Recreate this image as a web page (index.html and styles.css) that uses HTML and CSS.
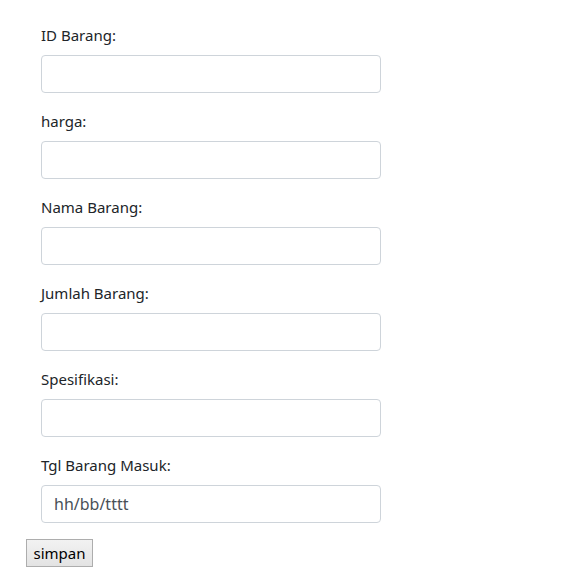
FILE: index.html
```html
<!DOCTYPE html>
<html lang="id">
<head>
<meta charset="utf-8">
<title>Form Barang</title>
<link rel="stylesheet" href="styles.css">
</head>
<body>
<form class="form">
  <div class="fields">
    <div class="group">
      <label class="label" for="id">ID Barang:</label>
      <input class="control" type="text" id="id">
    </div>
    <div class="group">
      <label class="label" for="harga">harga:</label>
      <input class="control" type="text" id="harga">
    </div>
    <div class="group">
      <label class="label" for="nama">Nama Barang:</label>
      <input class="control" type="text" id="nama">
    </div>
    <div class="group">
      <label class="label" for="jumlah">Jumlah Barang:</label>
      <input class="control" type="text" id="jumlah">
    </div>
    <div class="group">
      <label class="label" for="spek">Spesifikasi:</label>
      <input class="control" type="text" id="spek">
    </div>
    <div class="group">
      <label class="label" for="tgl">Tgl Barang Masuk:</label>
      <input class="control" type="text" id="tgl" placeholder="hh/bb/tttt">
    </div>
  </div>
  <button class="btn" type="button">simpan</button>
</form>
</body>
</html>
```
FILE: styles.css
```css
html, body {
  margin: 0;
  padding: 0;
  background: #fff;
}
body {
  font-family: "Noto Sans", "Open Sans", sans-serif;
  font-size: 15px;
  line-height: 24px;
  color: #212529;
}
.form {
  padding: 23px 0 0 26px;
}
.fields {
  padding-left: 15px;
  display: flex;
  flex-direction: column;
  gap: 16px;
}
.group {
  display: flex;
  flex-direction: column;
  align-items: flex-start;
}
.label {
  display: block;
  height: 24px;
  margin-bottom: 8px;
}
.control {
  box-sizing: border-box;
  width: 340px;
  height: 38px;
  margin: 0;
  padding: 6px 12px;
  font-family: inherit;
  font-size: 16px;
  line-height: 24px;
  color: #495057;
  background: #fff;
  border: 1px solid #ced4da;
  border-radius: 4px;
  outline: none;
}
.control::placeholder {
  color: #495057;
  opacity: 1;
}
.btn {
  box-sizing: border-box;
  margin-top: 16px;
  width: 67px;
  height: 28px;
  padding: 0 6px;
  font-family: inherit;
  font-size: 15px;
  line-height: 24px;
  color: #000;
  background: linear-gradient(#f2f2f2, #e3e3e3);
  border: 1px solid #adadad;
  border-radius: 0;
}
```
